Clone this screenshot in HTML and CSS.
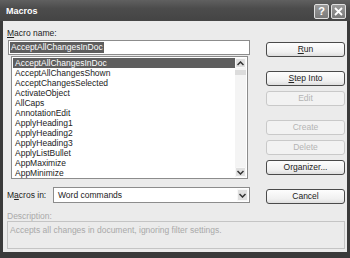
FILE: index.html
```html
<!DOCTYPE html>
<html>
<head>
<meta charset="utf-8">
<link rel="stylesheet" href="styles.css">
</head>
<body>
<div class="window">
  <div class="titlebar">
    <span class="title">Macros</span>
    <div class="caps">
      <span class="cap">?</span>
      <span class="cap"><svg width="9" height="9" viewBox="0 0 9 9"><path d="M1 1L8 8M8 1L1 8" stroke="#fff" stroke-width="1.8"/></svg></span>
    </div>
  </div>
  <div class="client">
    <div class="main">
      <div class="left">
        <div class="lbl"><u>M</u>acro name:</div>
        <div class="input"><span class="sel">AcceptAllChangesInDoc</span></div>
        <div class="list">
          <ul class="items">
            <li class="on">AcceptAllChangesInDoc</li>
            <li>AcceptAllChangesShown</li>
            <li>AcceptChangesSelected</li>
            <li>ActivateObject</li>
            <li>AllCaps</li>
            <li>AnnotationEdit</li>
            <li>ApplyHeading1</li>
            <li>ApplyHeading2</li>
            <li>ApplyHeading3</li>
            <li>ApplyListBullet</li>
            <li>AppMaximize</li>
            <li>AppMinimize</li>
          </ul>
          <div class="scrollbar">
            <span class="sbtn"><svg width="7" height="5" viewBox="0 0 7 5"><path d="M0.5 4L3.5 1L6.5 4" fill="none" stroke="#333" stroke-width="1.5"/></svg></span>
            <span class="thumb"></span>
            <span class="track"></span>
            <span class="sbtn"><svg width="7" height="5" viewBox="0 0 7 5"><path d="M0.5 1L3.5 4L6.5 1" fill="none" stroke="#333" stroke-width="1.5"/></svg></span>
          </div>
        </div>
        <div class="inrow">
          <span class="lbl">M<u>a</u>cros in:</span>
          <div class="combo">
            <span class="combo-text">Word commands</span>
            <span class="sbtn dd"><svg width="7" height="5" viewBox="0 0 7 5"><path d="M0.5 1L3.5 4L6.5 1" fill="none" stroke="#333" stroke-width="1.5"/></svg></span>
          </div>
        </div>
      </div>
      <div class="buttons">
        <span class="btn"><u>R</u>un</span>
        <span class="btn gap"><u>S</u>tep Into</span>
        <span class="btn off">Edit</span>
        <span class="btn off gap">Create</span>
        <span class="btn off">Delete</span>
        <span class="btn">Organizer...</span>
        <span class="btn gap">Cancel</span>
      </div>
    </div>
    <div class="desc-label">Description:</div>
    <div class="desc">Accepts all changes in document, ignoring filter settings.</div>
  </div>
</div>
</body>
</html>
```

FILE: styles.css
```css
* { box-sizing: border-box; }
html, body { margin: 0; padding: 0; background: #3a3a3a; }
body { width: 350px; height: 258px; overflow: hidden; font-family: "Liberation Sans", Arial, sans-serif; font-size: 8.5px; color: #222; }
.window { width: 350px; height: 258px; background: #3a3a3a; display: flex; flex-direction: column; }
.titlebar { height: 21px; flex: none; display: flex; align-items: center; justify-content: space-between; padding: 0 4px 0 6px; background: linear-gradient(#606060, #4c4c4c 40%, #444); }
.title { color: #fff; font-weight: bold; font-size: 9px; }
.caps { display: flex; gap: 2px; margin-top: 1px; }
.cap { width: 15px; height: 15px; border: 1px solid #e0e0e0; border-radius: 2px; background: linear-gradient(#9a9a9a, #7a7a7a); color: #fff; font-weight: bold; font-size: 11px; display: flex; align-items: center; justify-content: center; line-height: 1; }
.client { flex: none; height: 231px; margin: 0 3px; background: #ebebeb; padding: 7px 2px 3px 4px; display: flex; flex-direction: column; }
.main { display: flex; }
.left { width: 247px; display: flex; flex-direction: column; }
.lbl { height: 12px; line-height: 11px; }
u { text-decoration: underline; }
.input { margin-left: 1px; height: 15px; width: 242px; background: #fff; border: 1px solid #8c8c8c; padding: 1px 1px; display: flex; }
.sel { background: #5e5e5e; color: #fff; line-height: 11px; padding: 0 1px; }
.list { margin: 1px 0 0 4px; width: 237px; height: 123px; background: #fff; border: 1px solid #8c8c8c; display: flex; padding: 1px 1px 0; }
.items { list-style: none; margin: 0; padding: 0; flex: 1; overflow: hidden; }
.items li { height: 10px; line-height: 10px; padding-left: 2px; white-space: nowrap; }
.items li.on { background: #5e5e5e; color: #fff; }
.scrollbar { width: 11px; display: flex; flex-direction: column; background: #f4f4f4; margin-bottom: 1px; }
.sbtn { width: 11px; height: 10px; flex: none; display: flex; align-items: center; justify-content: center; background: #e0e0e0; border: 1px solid #f8f8f8; border-radius: 1px; }
.thumb { height: 5px; margin-top: 2px; background: #dcdcdc; flex: none; }
.track { flex: 1; }
.inrow { margin-top: 8px; height: 16px; display: flex; align-items: center; }
.inrow .lbl { width: 46px; height: auto; }
.combo { width: 197px; height: 16px; background: #fff; border: 1px solid #8c8c8c; display: flex; align-items: center; padding: 1px; }
.combo-text { flex: 1; padding-left: 3px; }
.dd { height: 12px; }
.buttons { margin-left: 12px; margin-top: 14px; display: flex; flex-direction: column; gap: 5px; }
.btn { width: 79px; height: 15px; border: 1px solid #4a4a4a; border-radius: 3px; background: linear-gradient(#fdfdfd, #f0f0f0 70%, #dedede); display: flex; align-items: center; justify-content: center; line-height: 1; }
.btn.gap { margin-top: 9px; }
.btn.off { border-color: #c9c9c9; color: #b4b4b4; background: #f2f2f2; }
.desc-label { margin-top: 7px; height: 10px; line-height: 10px; color: #a9a9a9; }
.desc { margin-top: 0; height: 29px; border: 1px solid #c4c4c4; color: #a9a9a9; padding: 3px 2px; line-height: 10px; }
```
